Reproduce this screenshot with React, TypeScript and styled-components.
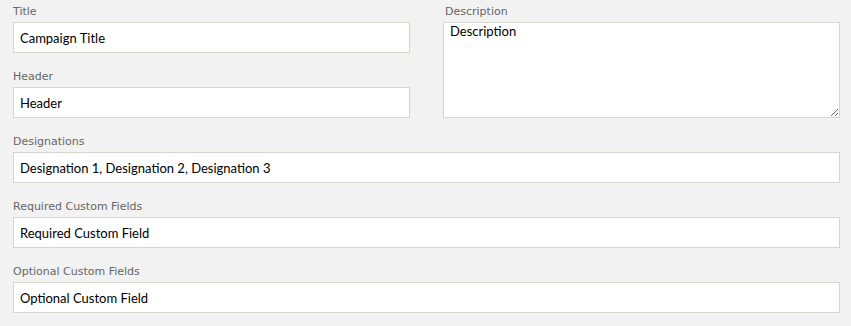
import React from 'react';
import styled, { createGlobalStyle } from 'styled-components';

const GlobalStyle = createGlobalStyle`
  html, body {
    margin: 0;
    padding: 0;
    background: #f2f2f2;
  }
`;

const fields = [
  { label: 'Designations', value: 'Designation 1, Designation 2, Designation 3' },
  { label: 'Required Custom Fields', value: 'Required Custom Field' },
  { label: 'Optional Custom Fields', value: 'Optional Custom Field' },
];

export default function App() {
  return (
    <>
      <GlobalStyle />
      <Form>
        <TopRow>
          <Column>
            <Field>
              <Label>Title</Label>
              <Input defaultValue="Campaign Title" />
            </Field>
            <Field>
              <Label>Header</Label>
              <Input defaultValue="Header" />
            </Field>
          </Column>
          <Column>
            <Field $grow>
              <Label $indent>Description</Label>
              <TextArea defaultValue="Description" />
            </Field>
          </Column>
        </TopRow>
        {fields.map((f) => (
          <Field key={f.label}>
            <Label>{f.label}</Label>
            <Input defaultValue={f.value} />
          </Field>
        ))}
      </Form>
    </>
  );
}

const Form = styled.div`
  display: flex;
  flex-direction: column;
  gap: 15px;
  width: 827px;
  padding: 3px 11px 0 13px;
`;

const TopRow = styled.div`
  display: grid;
  grid-template-columns: 1fr 1fr;
  column-gap: 33px;
`;

const Column = styled.div`
  display: flex;
  flex-direction: column;
  gap: 15px;
`;

const Field = styled.div<{ $grow?: boolean }>`
  display: flex;
  flex-direction: column;
  flex: ${({ $grow }) => ($grow ? '1 1 auto' : '0 0 auto')};
`;

const Label = styled.label<{ $indent?: boolean }>`
  display: block;
  padding-top: 2px;
  margin-bottom: 3px;
  padding-left: ${({ $indent }) => ($indent ? '2px' : '0')};
  font-family: 'DejaVu Sans', Verdana, sans-serif;
  font-size: 11px;
  line-height: 14px;
  color: #666;
`;

const Input = styled.input`
  box-sizing: border-box;
  width: 100%;
  height: 31px;
  margin: 0;
  padding: 0 6px;
  border: 1px solid #d6d6cc;
  background: #fff;
  font-family: Lato, sans-serif;
  font-size: 13px;
  color: #000;
  outline: none;
`;

const TextArea = styled.textarea`
  box-sizing: border-box;
  flex: 1 1 auto;
  width: 100%;
  margin: 0;
  padding: 0 6px;
  border: 1px solid #d6d6cc;
  background: #fff;
  font-family: Lato, sans-serif;
  font-size: 13px;
  line-height: 17px;
  color: #000;
  outline: none;
  resize: vertical;
`;
